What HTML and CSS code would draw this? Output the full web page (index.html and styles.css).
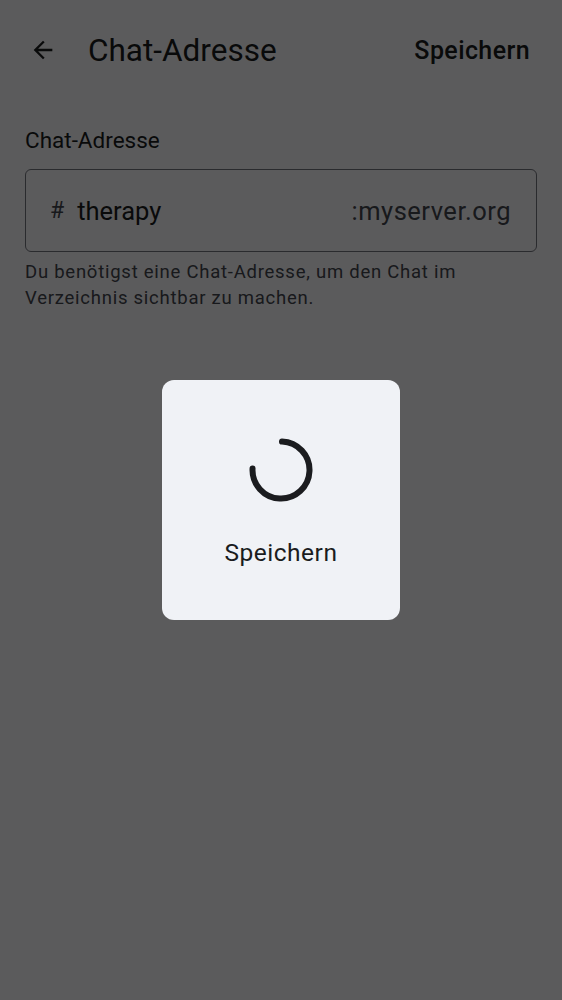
FILE: index.html
```html
<!DOCTYPE html>
<html lang="de">
<head>
<meta charset="utf-8">
<link rel="stylesheet" href="styles.css">
</head>
<body>
<div class="page">
  <header class="topbar">
    <button class="back" aria-label="Zurück">
      <svg width="28" height="28" viewBox="0 0 24 24"><path d="M20 11H7.83l5.59-5.59L12 4l-8 8 8 8 1.41-1.41L7.83 13H20v-2z" fill="currentColor"/></svg>
    </button>
    <h1 class="title">Chat-Adresse</h1>
    <span class="action">Speichern</span>
  </header>
  <main class="content">
    <label class="label">Chat-Adresse</label>
    <div class="field">
      <span class="hash">#</span>
      <span class="value">therapy</span>
      <span class="suffix">:myserver.org</span>
    </div>
    <p class="hint">Du benötigst eine Chat-Adresse, um den Chat im Verzeichnis sichtbar zu machen.</p>
  </main>
</div>
<div class="scrim">
  <div class="dialog">
    <svg class="spinner" width="66" height="66" viewBox="0 0 66 66">
      <path d="M34 4.55 A28.5 28.5 0 1 1 4.55 31.5" fill="none" stroke="#1b1c1f" stroke-width="6" stroke-linecap="round"/>
    </svg>
    <div class="dialog-text">Speichern</div>
  </div>
</div>
</body>
</html>
```
FILE: styles.css
```css
html, body {
  margin: 0;
  padding: 0;
}
body {
  width: 562px;
  height: 1000px;
  background: #ffffff;
  font-family: Roboto, "Noto Sans", sans-serif;
  color: #1a1c1e;
  overflow: hidden;
}
.page {
  height: 1000px;
  background: #fdfcff;
}
.topbar {
  display: flex;
  align-items: center;
  height: 100px;
  padding: 0 32px 0 28px;
}
.back {
  border: 0;
  background: none;
  padding: 0;
  width: 30px;
  height: 30px;
  display: flex;
  align-items: center;
  justify-content: center;
  color: #1a1c1e;
}
.title {
  margin: 0 0 0 30px;
  font-size: 31.5px;
  font-weight: 400;
  flex: 1;
}
.action {
  font-size: 25px;
  font-weight: 500;
  letter-spacing: 0.4px;
  color: #1a1c1e;
}
.content {
  padding: 25px 25px 0 25px;
}
.label {
  display: block;
  font-size: 22.5px;
  line-height: 30px;
  color: #1a1c1e;
}
.field {
  margin-top: 14px;
  height: 81px;
  border: 1px solid #74777f;
  border-radius: 6px;
  display: flex;
  align-items: center;
  padding: 0 25px 0 24px;
  font-size: 25.5px;
}
.hash {
  color: #44474e;
  font-size: 23px;
  margin-right: 13px;
}
.value {
  flex: 1;
  color: #1a1c1e;
}
.suffix {
  color: #44474e;
  letter-spacing: 0.5px;
}
.hint {
  margin: 7px 0 0 0;
  font-size: 18.5px;
  line-height: 26px;
  letter-spacing: 0.75px;
  color: #44474e;
  width: 480px;
}
.scrim {
  position: fixed;
  inset: 0;
  background: rgba(0, 0, 0, 0.64);
  display: flex;
  justify-content: center;
  align-items: flex-start;
}
.dialog {
  margin-top: 380px;
  width: 238px;
  height: 240px;
  box-sizing: border-box;
  background: #f0f2f6;
  border-radius: 12px;
  display: flex;
  flex-direction: column;
  align-items: center;
  padding-top: 57px;
}
.spinner {
  display: block;
}
.dialog-text {
  margin-top: 36px;
  font-size: 24.5px;
  line-height: 28px;
  letter-spacing: 0.5px;
  color: #1a1c1e;
}
```
